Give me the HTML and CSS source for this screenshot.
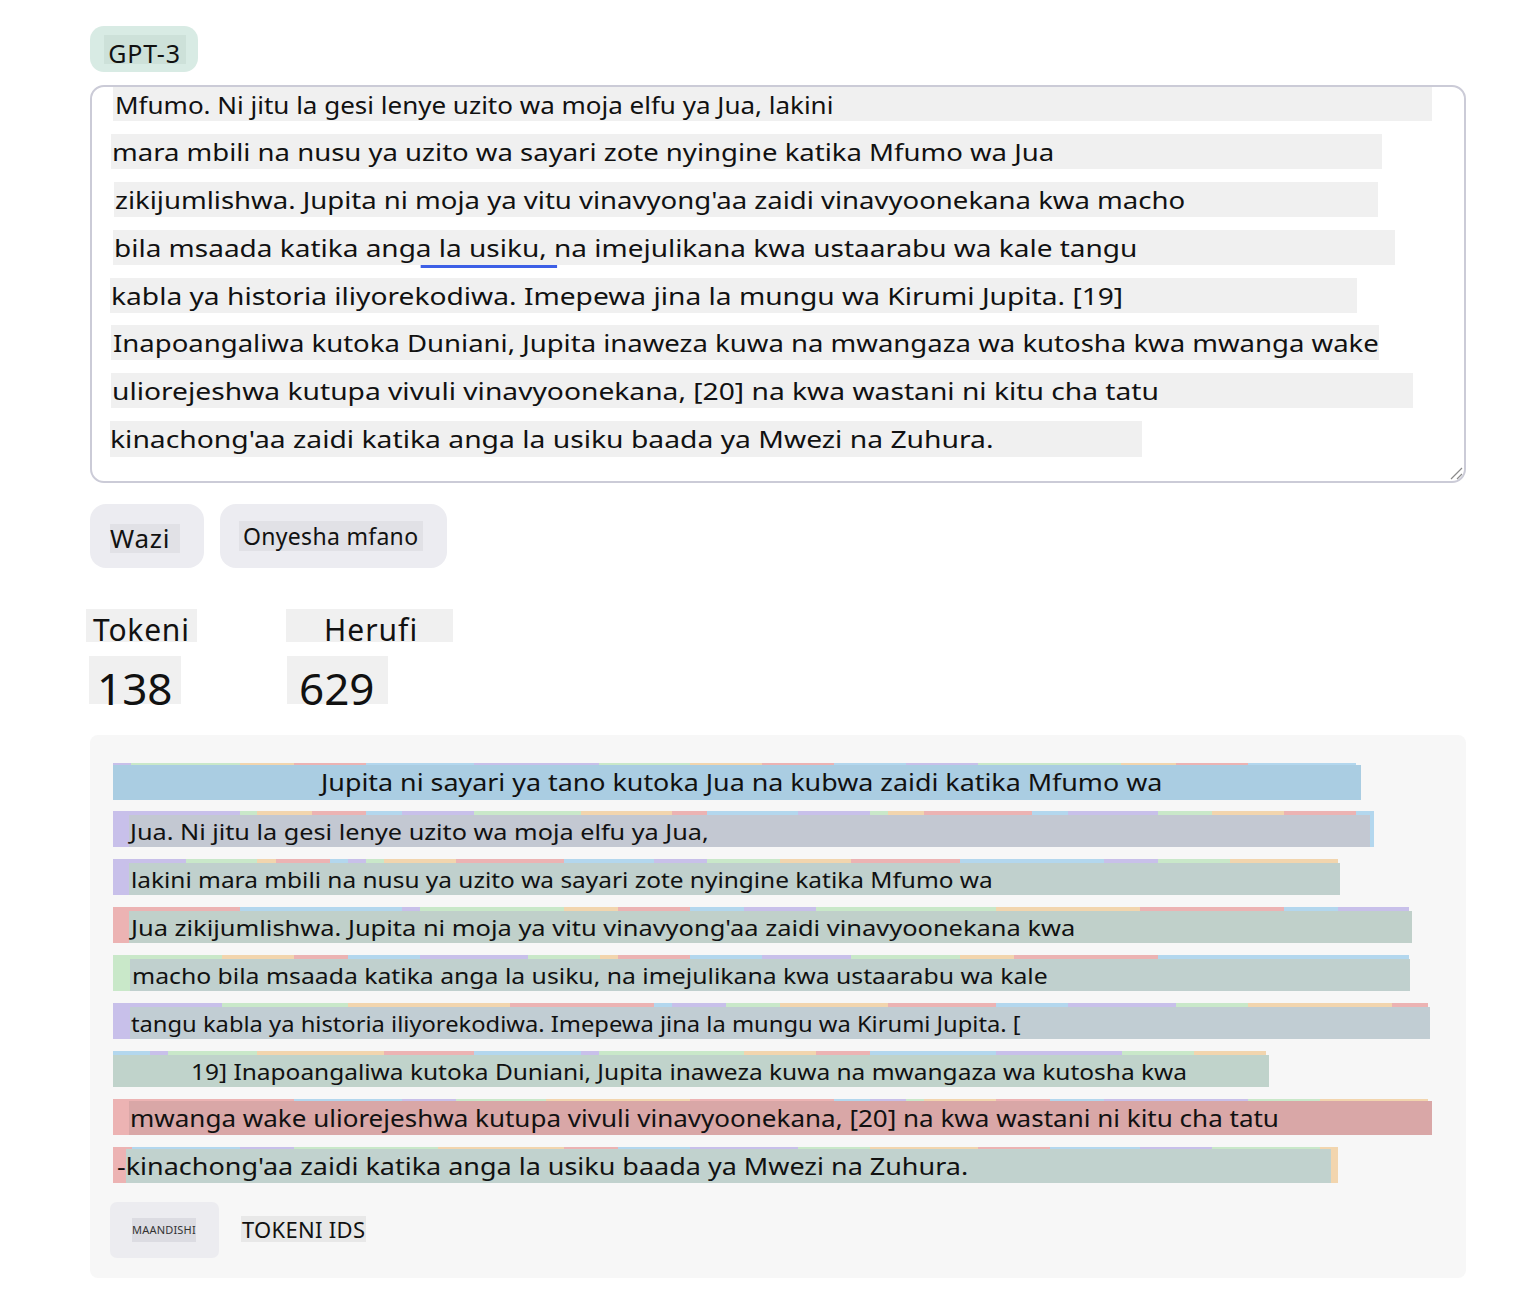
FILE: index.html
```html
<!DOCTYPE html>
<html lang="sw">
<head>
<meta charset="utf-8">
<title>Tokenizer</title>
<link rel="stylesheet" href="styles.css">
</head>
<body>
<div class="page">
  <div class="model"><span class="model-txt">GPT-3</span></div>

  <div class="editor">
    <div class="ln l1"><span class="tx">Mfumo. Ni jitu la gesi lenye uzito wa moja elfu ya Jua, lakini</span></div>
    <div class="ln l2"><span class="tx">mara mbili na nusu ya uzito wa sayari zote nyingine katika Mfumo wa Jua</span></div>
    <div class="ln l3"><span class="tx">zikijumlishwa. Jupita ni moja ya vitu vinavyong'aa zaidi vinavyoonekana kwa macho</span></div>
    <div class="ln l4"><span class="tx">bila msaada katika ang<span class="spell">a la usiku, </span>na imejulikana kwa ustaarabu wa kale tangu</span></div>
    <div class="ln l5"><span class="tx">kabla ya historia iliyorekodiwa. Imepewa jina la mungu wa Kirumi Jupita. [19]</span></div>
    <div class="ln l6"><span class="tx">Inapoangaliwa kutoka Duniani, Jupita inaweza kuwa na mwangaza wa kutosha kwa mwanga wake</span></div>
    <div class="ln l7"><span class="tx">uliorejeshwa kutupa vivuli vinavyoonekana, [20] na kwa wastani ni kitu cha tatu</span></div>
    <div class="ln l8"><span class="tx">kinachong'aa zaidi katika anga la usiku baada ya Mwezi na Zuhura.</span></div>
    <svg class="grip" width="14" height="14" viewBox="0 0 14 14"><path d="M13 2 L2 13 M13 8 L8 13" stroke="#8a8a8a" stroke-width="1.2" fill="none"/></svg>
  </div>

  <div class="actions">
    <button class="btn btn-clear"><span class="btn-txt">Wazi</span></button>
    <button class="btn btn-demo"><span class="btn-txt">Onyesha mfano</span></button>
  </div>

  <div class="stats">
    <div class="stat">
      <div class="stat-label lbl-tok">Tokeni</div>
      <div class="stat-val val-tok">138</div>
    </div>
    <div class="stat">
      <div class="stat-label lbl-her">Herufi</div>
      <div class="stat-val val-her">629</div>
    </div>
  </div>

  <div class="tokens">
    <div class="trow r1">
      <div class="strip"><i class="c1" style="width:18px"></i><i class="c2" style="width:109px"></i><i class="c3" style="width:54px"></i><i class="c4" style="width:72px"></i><i class="c5" style="width:108px"></i><i class="c1" style="width:125px"></i><i class="c2" style="width:91px"></i><i class="c3" style="width:72px"></i><i class="c4" style="width:72px"></i><i class="c5" style="width:72px"></i><i class="c1" style="width:72px"></i><i class="c2" style="width:143px"></i><i class="c3" style="width:55px"></i><i class="c4" style="width:72px"></i><i class="c5" style="width:108px"></i></div>
      <div class="ov"><span class="tx">Jupita ni sayari ya tano kutoka Jua na kubwa zaidi katika Mfumo wa</span></div>
    </div>
    <div class="trow r2">
      <div class="strip"><i class="c1" style="width:127px"></i><i class="c2" style="width:17px"></i><i class="c3" style="width:55px"></i><i class="c4" style="width:54px"></i><i class="c5" style="width:36px"></i><i class="c1" style="width:72px"></i><i class="c2" style="width:107px"></i><i class="c3" style="width:91px"></i><i class="c4" style="width:35px"></i><i class="c5" style="width:91px"></i><i class="c1" style="width:72px"></i><i class="c2" style="width:18px"></i><i class="c3" style="width:36px"></i><i class="c4" style="width:108px"></i><i class="c5" style="width:36px"></i><i class="c1" style="width:90px"></i><i class="c2" style="width:54px"></i><i class="c3" style="width:72px"></i><i class="c4" style="width:72px"></i><i class="c5" style="width:18px"></i></div>
      <div class="ov"><span class="tx">Jua. Ni jitu la gesi lenye uzito wa moja elfu ya Jua,</span></div>
    </div>
    <div class="trow r3">
      <div class="strip"><i class="c1" style="width:73px"></i><i class="c2" style="width:71px"></i><i class="c3" style="width:19px"></i><i class="c4" style="width:54px"></i><i class="c5" style="width:18px"></i><i class="c1" style="width:18px"></i><i class="c2" style="width:18px"></i><i class="c3" style="width:72px"></i><i class="c4" style="width:108px"></i><i class="c5" style="width:90px"></i><i class="c1" style="width:53px"></i><i class="c2" style="width:73px"></i><i class="c3" style="width:71px"></i><i class="c4" style="width:109px"></i><i class="c5" style="width:144px"></i><i class="c1" style="width:54px"></i><i class="c2" style="width:72px"></i><i class="c3" style="width:108px"></i></div>
      <div class="ov"><span class="tx">lakini mara mbili na nusu ya uzito wa sayari zote nyingine katika Mfumo wa</span></div>
    </div>
    <div class="trow r4">
      <div class="strip"><i class="c4" style="width:127px"></i><i class="c5" style="width:162px"></i><i class="c1" style="width:18px"></i><i class="c2" style="width:144px"></i><i class="c3" style="width:54px"></i><i class="c4" style="width:72px"></i><i class="c5" style="width:54px"></i><i class="c1" style="width:72px"></i><i class="c2" style="width:180px"></i><i class="c3" style="width:144px"></i><i class="c4" style="width:144px"></i><i class="c5" style="width:54px"></i><i class="c1" style="width:71px"></i></div>
      <div class="ov"><span class="tx">Jua zikijumlishwa. Jupita ni moja ya vitu vinavyong'aa zaidi vinavyoonekana kwa</span></div>
    </div>
    <div class="trow r5">
      <div class="strip"><i class="c2" style="width:109px"></i><i class="c3" style="width:72px"></i><i class="c4" style="width:54px"></i><i class="c5" style="width:72px"></i><i class="c1" style="width:108px"></i><i class="c2" style="width:72px"></i><i class="c3" style="width:18px"></i><i class="c4" style="width:72px"></i><i class="c5" style="width:72px"></i><i class="c1" style="width:89px"></i><i class="c2" style="width:109px"></i><i class="c3" style="width:54px"></i><i class="c4" style="width:144px"></i><i class="c5" style="width:251px"></i></div>
      <div class="ov"><span class="tx">macho bila msaada katika anga la usiku, na imejulikana kwa ustaarabu wa kale</span></div>
    </div>
    <div class="trow r6">
      <div class="strip"><i class="c1" style="width:109px"></i><i class="c2" style="width:126px"></i><i class="c3" style="width:162px"></i><i class="c4" style="width:144px"></i><i class="c5" style="width:18px"></i><i class="c1" style="width:54px"></i><i class="c2" style="width:54px"></i><i class="c3" style="width:108px"></i><i class="c4" style="width:108px"></i><i class="c5" style="width:72px"></i><i class="c1" style="width:108px"></i><i class="c2" style="width:72px"></i><i class="c3" style="width:144px"></i><i class="c4" style="width:36px"></i></div>
      <div class="ov"><span class="tx">tangu kabla ya historia iliyorekodiwa. Imepewa jina la mungu wa Kirumi Jupita. [</span></div>
    </div>
    <div class="trow r7">
      <div class="strip"><i class="c5" style="width:37px"></i><i class="c1" style="width:18px"></i><i class="c2" style="width:89px"></i><i class="c3" style="width:127px"></i><i class="c4" style="width:90px"></i><i class="c5" style="width:107px"></i><i class="c1" style="width:18px"></i><i class="c2" style="width:145px"></i><i class="c3" style="width:72px"></i><i class="c4" style="width:54px"></i><i class="c5" style="width:126px"></i><i class="c1" style="width:126px"></i><i class="c2" style="width:72px"></i><i class="c3" style="width:72px"></i></div>
      <div class="ov"><span class="tx">19] Inapoangaliwa kutoka Duniani, Jupita inaweza kuwa na mwangaza wa kutosha kwa</span></div>
    </div>
    <div class="trow r8">
      <div class="strip"><i class="c4" style="width:181px"></i><i class="c5" style="width:108px"></i><i class="c1" style="width:54px"></i><i class="c2" style="width:90px"></i><i class="c3" style="width:144px"></i><i class="c4" style="width:144px"></i><i class="c5" style="width:36px"></i><i class="c1" style="width:36px"></i><i class="c2" style="width:18px"></i><i class="c3" style="width:72px"></i><i class="c4" style="width:54px"></i><i class="c5" style="width:54px"></i><i class="c1" style="width:144px"></i><i class="c2" style="width:72px"></i><i class="c3" style="width:108px"></i></div>
      <div class="ov"><span class="tx">mwanga wake uliorejeshwa kutupa vivuli vinavyoonekana, [20] na kwa wastani ni kitu cha tatu</span></div>
    </div>
    <div class="trow r9">
      <div class="strip"><i class="c4" style="width:19px"></i><i class="c5" style="width:108px"></i><i class="c1" style="width:54px"></i><i class="c2" style="width:144px"></i><i class="c3" style="width:126px"></i><i class="c4" style="width:54px"></i><i class="c5" style="width:72px"></i><i class="c1" style="width:108px"></i><i class="c2" style="width:72px"></i><i class="c3" style="width:108px"></i><i class="c4" style="width:72px"></i><i class="c5" style="width:90px"></i><i class="c1" style="width:72px"></i><i class="c2" style="width:108px"></i><i class="c3" style="width:18px"></i></div>
      <div class="ov"><span class="tx">-kinachong'aa zaidi katika anga la usiku baada ya Mwezi na Zuhura.</span></div>
    </div>

    <div class="view">
      <button class="view-btn"><span class="view-btn-txt">MAANDISHI</span></button>
      <span class="view-alt">TOKENI IDS</span>
    </div>
  </div>
</div>
</body>
</html>
```

FILE: styles.css
```css
* { box-sizing: border-box; }
html, body { margin: 0; padding: 0; background: #ffffff; }
body {
  font-family: "Noto Sans", "Open Sans", sans-serif;
  color: #111111;
  width: 1528px;
  min-height: 1292px;
}
.page {
  padding: 26px 0 0 90px;
  width: 1466px;
  display: flex;
  flex-direction: column;
}
.tx {
  display: inline-block;
  transform-origin: 0 50%;
  white-space: nowrap;
}

/* model pill */
.model {
  width: 108px;
  height: 46px;
  border-radius: 14px;
  background: #d8ebe4;
  display: flex;
  align-items: center;
  justify-content: center;
}
.model-txt {
  display: inline-block;
  background: #cde1d9;
  height: 29px;
  font-size: 25px;
  line-height: 36px;
  letter-spacing: 0.8px;
  padding: 0 5px 0 4px;
  margin-left: 2px;
}

/* editor */
.editor {
  position: relative;
  margin-top: 13px;
  width: 1376px;
  height: 398px;
  border: 2px solid #cbcbd7;
  border-radius: 14px;
  background: #fff;
  padding: 0;
}
.ln {
  height: 35px;
  margin-bottom: 13px;
  background: #f0f0f0;
  font-size: 24px;
  line-height: 35px;
  white-space: nowrap;
  padding-left: 2px;
}
.l1 { margin-left: 21px; width: 1319px; height: 34px; }
.l1 .tx { transform: scaleX(1.083); }
.l2 { margin-left: 19px; width: 1271px; padding-left: 1px; }
.l2 .tx { transform: scaleX(1.146); }
.l3 { margin-left: 22px; width: 1264px; padding-left: 1px; }
.l3 .tx { transform: scaleX(1.147); }
.l4 { margin-left: 21px; width: 1282px; padding-left: 1px; }
.l4 .tx { transform: scaleX(1.166); }
.l5 { margin-left: 18px; width: 1247px; margin-top: 1px; padding-left: 1px; }
.l5 .tx { transform: scaleX(1.173); }
.l6 { margin-left: 19px; width: 1268px; margin-top: -1px; }
.l6 .tx { transform: scaleX(1.146); }
.l7 { margin-left: 19px; width: 1302px; padding-left: 1px; }
.l7 .tx { transform: scaleX(1.175); }
.l8 { margin-left: 18px; width: 1032px; height: 36px; padding-left: 0; }
.l8 .tx { transform: scaleX(1.178); }
.spell { position: relative; }
.spell::after {
  content: "";
  position: absolute;
  left: 4px;
  right: -3px;
  bottom: -4px;
  height: 3px;
  background: #3d5fe6;
}
.grip { position: absolute; right: 1px; bottom: 1px; }

/* buttons */
.actions {
  margin-top: 21px;
  display: flex;
  gap: 16px;
}
.btn {
  border: 0;
  height: 64px;
  border-radius: 16px;
  background: #ececf1;
  font-family: inherit;
  color: #111;
  display: flex;
  align-items: center;
  padding: 0;
}
.btn-clear { width: 114px; padding-left: 20px; }
.btn-demo { width: 227px; padding-left: 19px; }
.btn-txt { background: #e1e1e6; }
.btn-clear .btn-txt { font-size: 26px; line-height: 29px; letter-spacing: 0.75px; padding: 0 10px 0 0; margin-top: 5px; }
.btn-demo .btn-txt { font-size: 23px; line-height: 30px; letter-spacing: 0.3px; padding: 0 5px 0 4px; }

/* stats */
.stats {
  margin-top: 41px;
  display: flex;
  margin-left: -4px;
}
.stat { display: flex; flex-direction: column; width: 200px; }
.stat-label {
  background: #f0f0f0;
  height: 33px;
  font-size: 30px;
  line-height: 42px;
  align-self: flex-start;
}
.lbl-tok { width: 111px; padding-left: 7px; letter-spacing: 0.8px; }
.lbl-her { width: 167px; padding-left: 38px; letter-spacing: 1px; }
.stat-val {
  margin-top: 14px;
  background: #f0f0f0;
  height: 48px;
  font-size: 44px;
  line-height: 64px;
  align-self: flex-start;
}
.val-tok { width: 92px; margin-left: 3px; padding-left: 8px; }
.val-her { width: 101px; margin-left: 1px; padding-left: 12px; }

/* tokens */
.tokens {
  margin-top: 31px;
  width: 1376px;
  background: #f7f7f7;
  border-radius: 8px;
  padding: 28px 0 20px 23px;
}
.trow {
  position: relative;
  height: 36px;
  margin-bottom: 12px;
}
.strip { display: flex; height: 36px; }
.strip i { display: block; height: 100%; flex: none; }
.c1 { background: #c8c0ea; }
.c2 { background: #c9e8c9; }
.c3 { background: #f2d5ae; }
.c4 { background: #ecb3b3; }
.c5 { background: #b3d7ee; }
.ov {
  position: absolute;
  top: 4px;
  height: 32px;
  line-height: 32px;
  font-size: 22px;
  white-space: nowrap;
  color: #111;
}
.r1 .ov { left: 0; top: 2px; height: 35px; line-height: 35px; width: 1248px; background: #aacde2; padding-left: 208px; font-size: 23px; }
.r1 .tx { transform: scaleX(1.167); }
.r2 .ov { left: 16px; width: 1241px; background: #c3c8d2; padding-left: 1px; }
.r2 .tx { transform: scaleX(1.147); }
.r3 .ov { left: 16px; width: 1211px; background: #c0d0cd; padding-left: 2px; }
.r3 .tx { transform: scaleX(1.11); }
.r4 .ov { left: 16px; width: 1283px; background: #c0d0ca; padding-left: 2px; }
.r4 .tx { transform: scaleX(1.156); }
.r5 .ov { left: 17px; width: 1280px; background: #c0d0ce; padding-left: 2px; }
.r5 .tx { transform: scaleX(1.125); }
.r6 .ov { left: 17px; width: 1300px; background: #c1cdd3; padding-left: 1px; }
.r6 .tx { transform: scaleX(1.078); }
.r7 .ov { left: 0; width: 1156px; background: #c0d3cb; padding-left: 78px; }
.r7 .tx { transform: scaleX(1.112); }
.r8 .ov { left: 16px; top: 2px; height: 34px; line-height: 34px; width: 1303px; background: #d9a7a7; padding-left: 1px; font-size: 23px; }
.r8 .tx { transform: scaleX(1.131); }
.r9 .ov { left: 13px; top: 2px; height: 34px; line-height: 34px; width: 1205px; background: #c1d2ce; padding-left: 0; font-size: 23px; }
.r9 .tx { transform: scaleX(1.172); margin-left: -9px; }

.view {
  margin-top: 19px;
  margin-left: -3px;
  display: flex;
  align-items: center;
  gap: 22px;
}
.view-btn {
  width: 109px;
  height: 56px;
  border: 0;
  border-radius: 7px;
  background: #ececf0;
  font-family: inherit;
  padding: 0 0 0 22px;
  display: flex;
  align-items: center;
}
.view-btn-txt {
  background: #dcdce2;
  font-size: 11px;
  line-height: 24px;
  color: #333;
  letter-spacing: 0.2px;
}
.view-alt {
  background: #e8e8e8;
  font-size: 22px;
  line-height: 26px;
  letter-spacing: 0.3px;
  padding: 0 1px;
  margin-top: -2px;
}
```
